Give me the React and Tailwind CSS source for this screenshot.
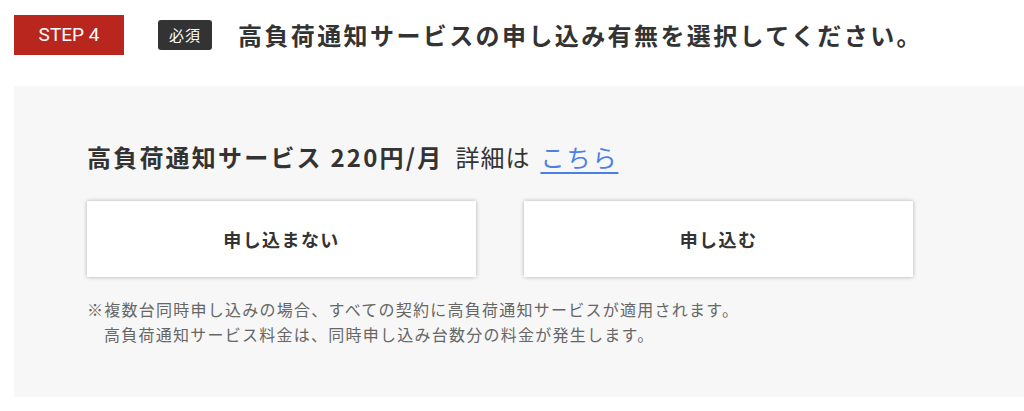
export default function App() {
  const font = { fontFamily: '"Noto Sans CJK JP", "Noto Sans", sans-serif' }

  return (
    <div className="w-[1024px] h-[411px] bg-white overflow-hidden text-[#333]" style={font}>
      {/* ヘッダー */}
      <div className="flex items-center pt-[15px] pl-[14px]">
        <div
          className="w-[110px] h-[40px] bg-[#b8261e] flex items-center justify-center text-white text-[19px]"
          style={{ fontFamily: 'Roboto, "Liberation Sans", sans-serif' }}
        >
          STEP 4
        </div>
        <span className="ml-[34px] w-[54px] h-[30px] rounded-[3px] bg-[#333] text-white text-[15px] tracking-[1px] flex items-center justify-center">
          必須
        </span>
        <h2 className="ml-[26px] text-[24px] font-bold tracking-[2.4px] leading-[30px] text-[#333]">
          高負荷通知サービスの申し込み有無を選択してください。
        </h2>
      </div>

      {/* 選択パネル */}
      <div className="mt-[31px] ml-[14px] bg-[#f7f7f7] pt-[55px] pb-[50px] pl-[73px]">
        <p className="text-[24px] leading-[32px] tracking-[1px]">
          <span className="font-bold tracking-[2.2px]">高負荷通知サービス 220円/月</span>
          <span className="ml-[12px]">詳細は</span>
          <a href="#" className="ml-[10px] text-[#4a80e6] underline decoration-2 underline-offset-[5px] tracking-[2px]">
            こちら
          </a>
        </p>

        <div className="mt-[28px] flex gap-[48px]">
          <button className="w-[389px] h-[76px] bg-white shadow-[0_0_4px_rgba(0,0,0,0.3)] text-[18px] font-bold tracking-[1.4px]">
            申し込まない
          </button>
          <button className="w-[389px] h-[76px] bg-white shadow-[0_0_4px_rgba(0,0,0,0.3)] text-[18px] font-bold tracking-[1.4px]">
            申し込む
          </button>
        </div>

        <div className="mt-[20px] text-[16px] leading-[25px] tracking-[1.25px] text-[#666]">
          <p>※複数台同時申し込みの場合、すべての契約に高負荷通知サービスが適用されます。</p>
          <p className="pl-[17px]">高負荷通知サービス料金は、同時申し込み台数分の料金が発生します。</p>
        </div>
      </div>
    </div>
  )
}
